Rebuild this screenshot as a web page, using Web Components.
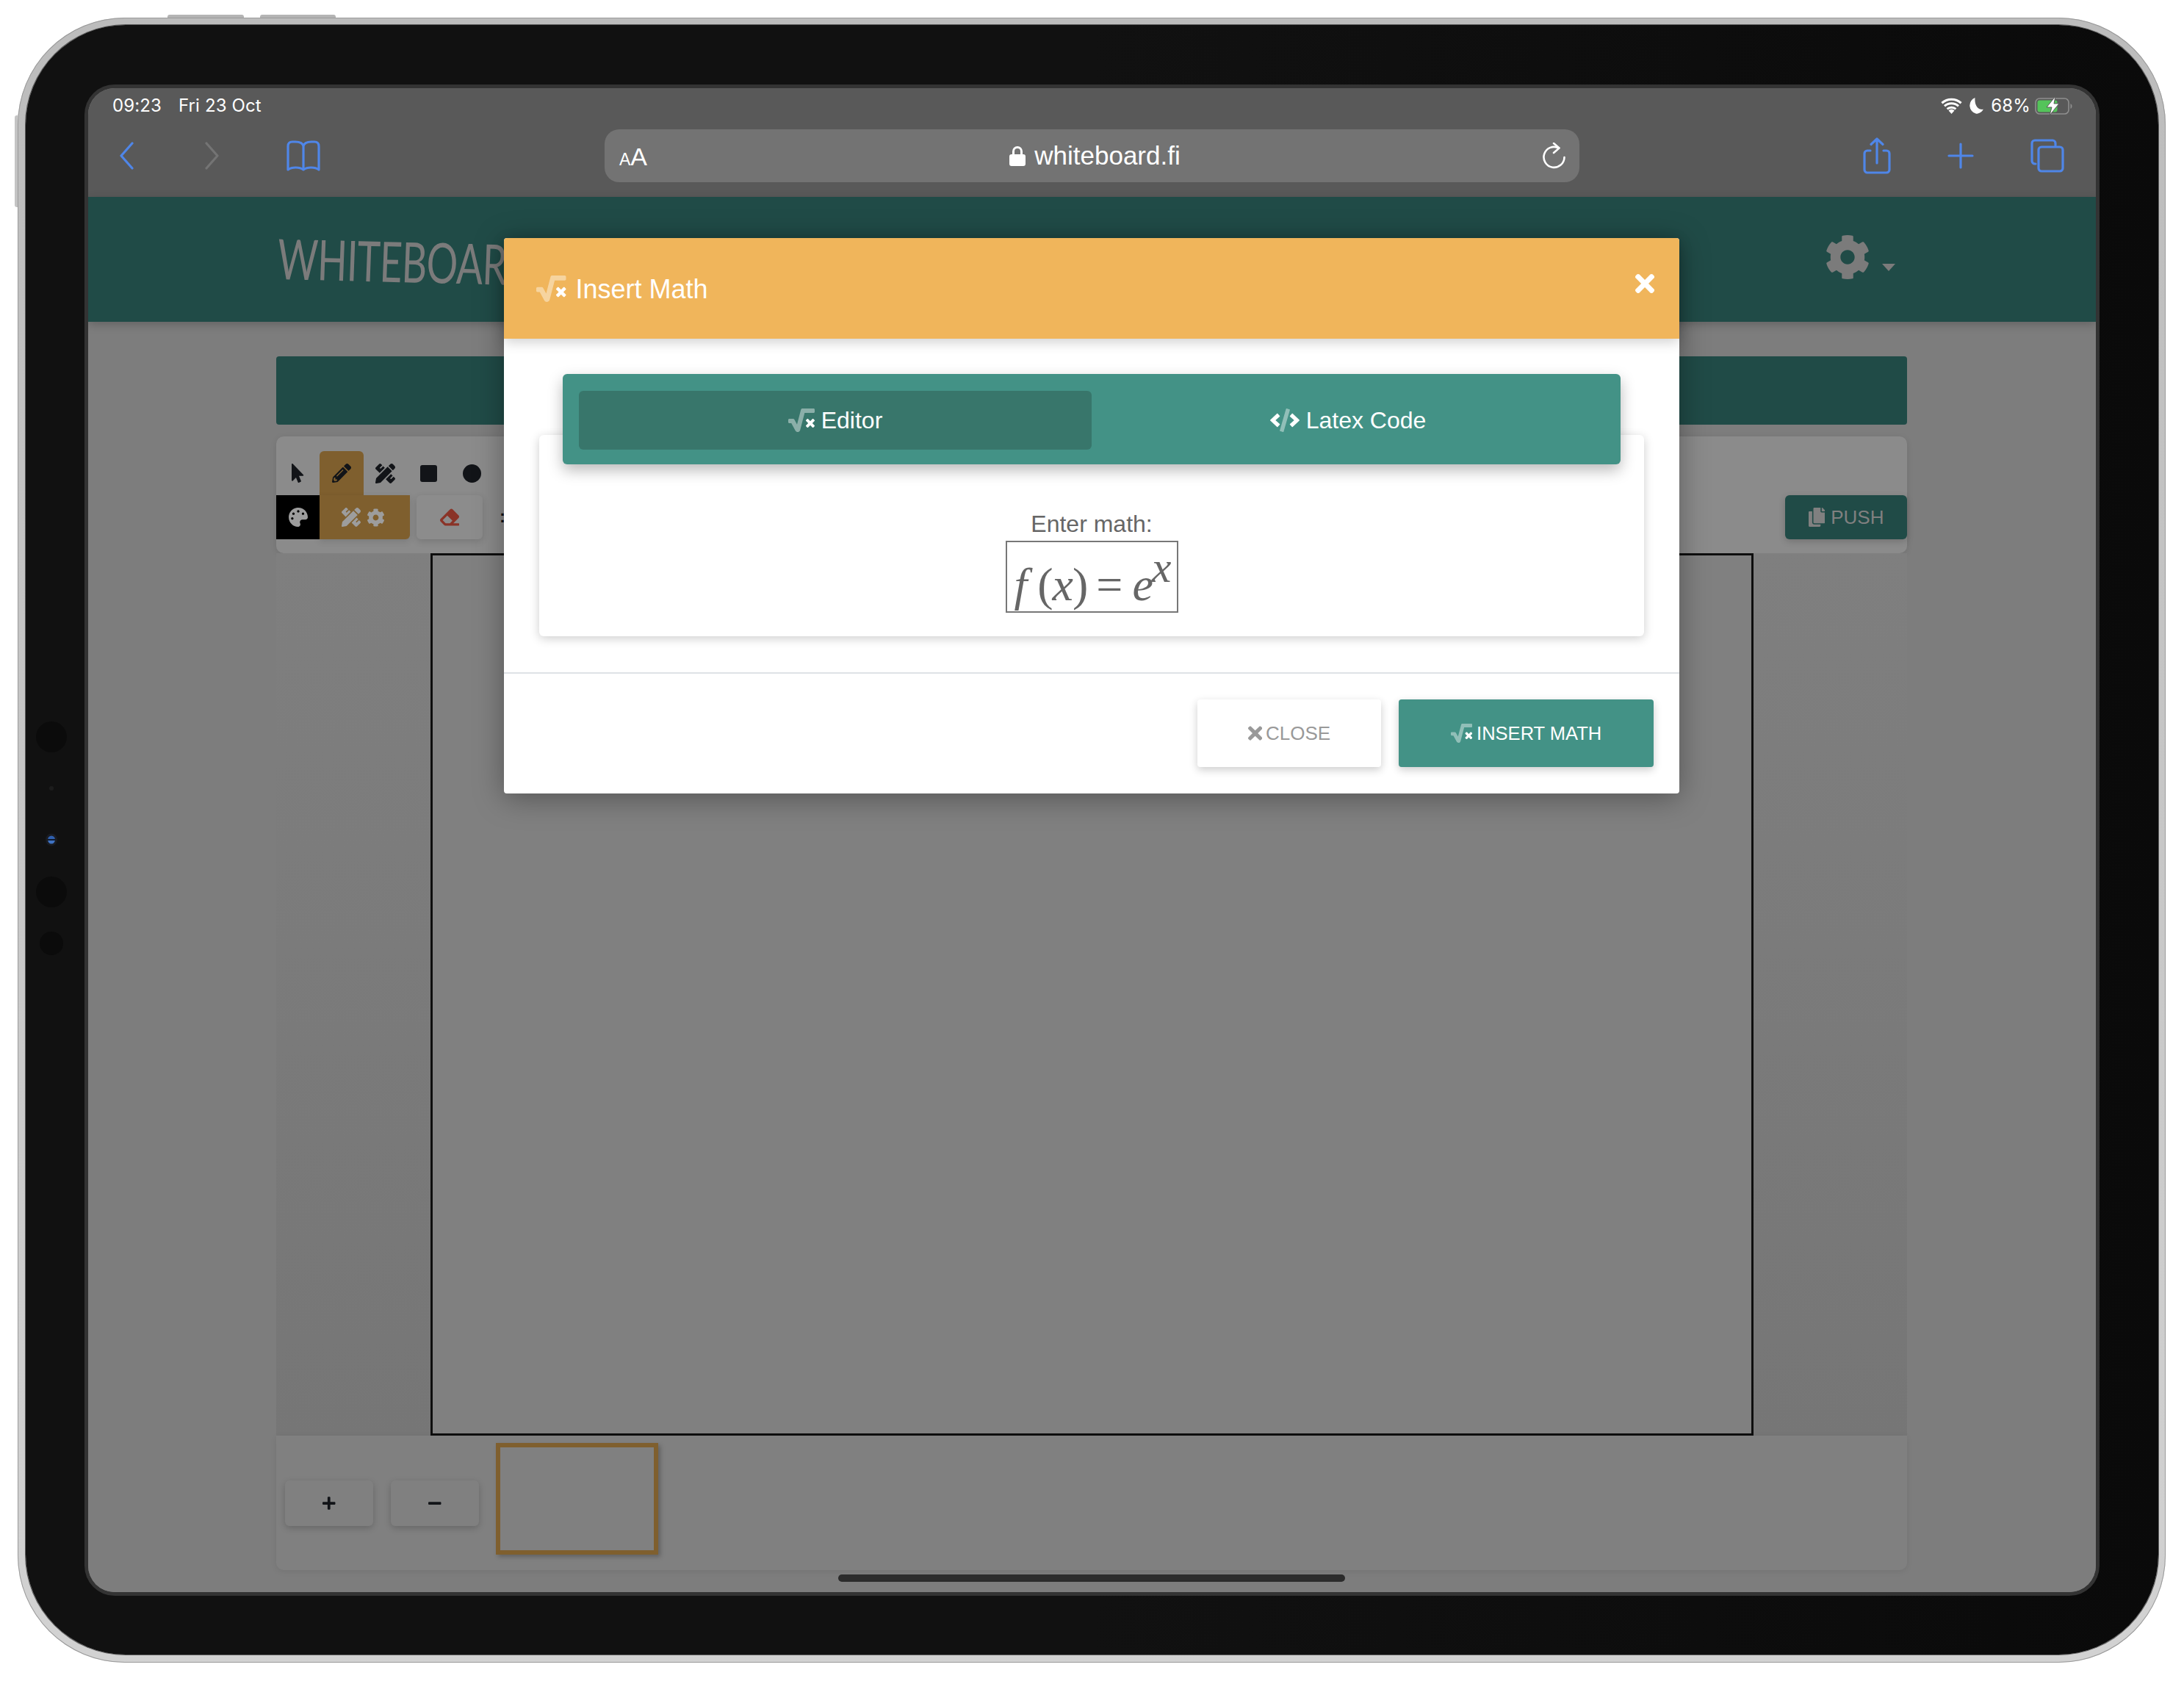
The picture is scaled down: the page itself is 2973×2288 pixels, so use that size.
<!DOCTYPE html>
<html lang="en">
<head>
<meta charset="utf-8">
<title>Whiteboard.fi on iPad</title>
<style>
html,body{margin:0;padding:0;background:#fff;}
body{width:2973px;height:2288px;overflow:hidden;font-family:"Liberation Sans",Arial,sans-serif;}
</style>
</head>
<body>
<ipad-frame>
  <safari-chrome></safari-chrome>
  <app-header></app-header>
  <board-page></board-page>
  <math-modal></math-modal>
</ipad-frame>
<script>
const ICONS={
cog:[512,"M487.4 315.7l-42.6-24.6c4.3-23.2 4.3-47 0-70.2l42.6-24.6c4.9-2.8 7.1-8.6 5.5-14-11.1-35.6-30-67.8-54.7-94.6-3.8-4.1-10-5.1-14.8-2.3L380.8 110c-17.9-15.4-38.5-27.3-60.8-35.1V25.8c0-5.6-3.9-10.5-9.4-11.7-36.7-8.2-74.3-7.8-109.2 0-5.5 1.2-9.4 6.1-9.4 11.7V75c-22.2 7.9-42.8 19.8-60.8 35.1L88.7 85.5c-4.9-2.8-11-1.9-14.8 2.3-24.7 26.7-43.6 58.9-54.7 94.6-1.7 5.4.6 11.2 5.5 14L67.3 221c-4.3 23.2-4.3 47 0 70.2l-42.6 24.6c-4.9 2.8-7.1 8.6-5.5 14 11.1 35.6 30 67.8 54.7 94.6 3.8 4.1 10 5.1 14.8 2.3l42.6-24.6c17.9 15.4 38.5 27.3 60.8 35.1v49.2c0 5.6 3.9 10.5 9.4 11.7 36.7 8.2 74.3 7.8 109.2 0 5.5-1.2 9.4-6.1 9.4-11.7v-49.2c22.2-7.9 42.8-19.8 60.8-35.1l42.6 24.6c4.9 2.8 11 1.9 14.8-2.3 24.7-26.7 43.6-58.9 54.7-94.6 1.5-5.5-.7-11.3-5.6-14.1zM256 336c-44.1 0-80-35.9-80-80s35.9-80 80-80 80 35.9 80 80-35.9 80-80 80z"],
pencil:[512,"M497.9 142.1l-46.1 46.1c-4.7 4.7-12.3 4.7-17 0l-111-111c-4.7-4.7-4.7-12.3 0-17l46.1-46.1c18.7-18.7 49.1-18.7 67.9 0l60.1 60.1c18.8 18.7 18.8 49.1 0 67.9zM284.2 99.8L21.6 362.4.4 483.9c-2.9 16.4 11.4 30.6 27.8 27.8l121.5-21.3 262.6-262.6c4.7-4.7 4.7-12.3 0-17l-111-111c-4.8-4.7-12.4-4.7-17.1 0zM124.1 339.9c-5.5-5.5-5.5-14.3 0-19.8l154-154c5.5-5.5 14.3-5.5 19.8 0s5.5 14.3 0 19.8l-154 154c-5.5 5.5-14.3 5.5-19.8 0zM88 424h48v36.3l-64.5 11.3-31.1-31.1L51.7 376H88v48z"],
pointer:[320,"M302.189 329.126H196.105l55.831 135.993c3.889 9.428-.555 19.999-9.444 23.999l-49.165 21.427c-9.165 4-19.443-.571-23.332-9.714l-53.053-129.136-86.664 89.138C18.729 472.71 0 463.554 0 447.977V18.299C0 1.899 19.921-6.096 30.277 5.443l284.412 292.542c11.472 11.179 3.007 31.141-12.5 31.141z"],
ruler:[512,"M109.46 244.04l134.58-134.56-44.12-44.12-61.68 61.68a7.919 7.919 0 0 1-11.21 0l-11.21-11.21c-3.1-3.1-3.1-8.12 0-11.21l61.68-61.68-33.64-33.65C131.47-3.1 111.39-3.1 99 9.29L9.29 99c-12.38 12.39-12.39 32.47 0 44.86l100.17 100.18zm388.47-116.8c18.76-18.76 18.75-49.17 0-67.93l-45.25-45.25c-18.76-18.76-49.18-18.76-67.95 0l-46.02 46.01 113.2 113.2 46.02-46.03zM316.08 82.71l-297 296.96L.32 487.11c-2.53 14.49 10.09 27.11 24.59 24.56l107.45-18.84L429.28 195.9 316.08 82.71zm186.63 285.43l-33.64-33.64-61.68 61.68c-3.1 3.1-8.12 3.1-11.21 0l-11.21-11.21c-3.09-3.1-3.09-8.12 0-11.21l61.68-61.68-44.14-44.14L267.93 402.5l100.21 100.2c12.39 12.39 32.47 12.39 44.86 0l89.71-89.7c12.39-12.39 12.39-32.47 0-44.86z"],
palette:[512,"M204.3 5C104.9 24.4 24.8 104.3 5.2 203.4c-37 187 131.7 326.4 258.8 306.7 41.2-6.4 61.4-54.6 42.5-91.7-23.1-45.4 9.9-98.4 60.9-98.4h79.7c35.8 0 64.8-29.6 64.9-65.3C511.5 97.1 368.1-26.9 204.3 5zM96 320c-17.7 0-32-14.3-32-32s14.3-32 32-32 32 14.3 32 32-14.3 32-32 32zm32-128c-17.7 0-32-14.3-32-32s14.3-32 32-32 32 14.3 32 32-14.3 32-32 32zm128-64c-17.7 0-32-14.3-32-32s14.3-32 32-32 32 14.3 32 32-14.3 32-32 32zm128 64c-17.7 0-32-14.3-32-32s14.3-32 32-32 32 14.3 32 32-14.3 32-32 32z"],
eraser:[512,"M497.941 273.941c18.745-18.745 18.745-49.137 0-67.882l-160-160c-18.745-18.745-49.136-18.746-67.883 0l-256 256c-18.745 18.745-18.745 49.137 0 67.882l96 96A48.004 48.004 0 0 0 144 480h356c6.627 0 12-5.373 12-12v-40c0-6.627-5.373-12-12-12H355.883l142.058-142.059zm-302.627-62.627l137.373 137.373L265.373 416H150.628l-80-80 124.686-124.686z"],
times:[352,"M242.72 256l100.07-100.07c12.28-12.28 12.28-32.19 0-44.48l-22.24-22.24c-12.28-12.28-32.19-12.28-44.48 0L176 189.28 75.93 89.21c-12.28-12.28-32.19-12.28-44.48 0L9.21 111.45c-12.28 12.28-12.28 32.19 0 44.48L109.28 256 9.21 356.07c-12.28 12.28-12.28 32.19 0 44.48l22.24 22.24c12.28 12.28 32.2 12.28 44.48 0L176 322.72l100.07 100.07c12.28 12.28 32.2 12.28 44.48 0l22.24-22.24c12.28-12.28 12.28-32.19 0-44.48L242.72 256z"],
copy:[448,"M320 448v40c0 13.255-10.745 24-24 24H24c-13.255 0-24-10.745-24-24V120c0-13.255 10.745-24 24-24h72v296c0 30.879 25.121 56 56 56h168zm0-344V0H152c-13.255 0-24 10.745-24 24v368c0 13.255 10.745 24 24 24h272c13.255 0 24-10.745 24-24V128H344c-13.2 0-24-10.8-24-24zm120.971-31.029L375.029 7.029A24 24 0 0 0 358.059 0H352v96h96v-6.059a24 24 0 0 0-7.029-16.97z"],
plus:[448,"M416 208H272V64c0-17.67-14.33-32-32-32h-32c-17.67 0-32 14.33-32 32v144H32c-17.67 0-32 14.33-32 32v32c0 17.67 14.33 32 32 32h144v144c0 17.67 14.33 32 32 32h32c17.67 0 32-14.33 32-32V304h144c17.67 0 32-14.33 32-32v-32c0-17.67-14.33-32-32-32z"],
minus:[448,"M416 208H32c-17.67 0-32 14.33-32 32v32c0 17.67 14.33 32 32 32h384c17.67 0 32-14.33 32-32v-32c0-17.67-14.33-32-32-32z"],
sqrt:[576,"M552 0H307.65c-14.54 0-27.26 9.8-30.95 23.87l-84.79 322.8-58.41-106.1A32.008 32.008 0 0 0 105.47 224H24c-13.25 0-24 10.74-24 24v48c0 13.25 10.75 24 24 24h43.62l88.88 163.73C168.99 503.5 186.3 512 204.94 512c17.27 0 44.44-9 54.28-41.48L357.03 96H552c13.25 0 24-10.75 24-24V24c0-13.26-10.75-24-24-24z","M571.31 251.31l-22.62-22.62c-6.25-6.25-16.38-6.25-22.63 0L480 274.75l-46.06-46.06c-6.25-6.25-16.38-6.25-22.63 0l-22.62 22.62c-6.25 6.25-6.25 16.38 0 22.63L434.75 320l-46.06 46.06c-6.25 6.25-6.25 16.38 0 22.63l22.62 22.62c6.25 6.25 16.38 6.25 22.63 0L480 365.25l46.06 46.06c6.25 6.25 16.38 6.25 22.63 0l22.62-22.62c6.25-6.25 6.25-16.38 0-22.63L525.25 320l46.06-46.06c6.25-6.25 6.25-16.38 0-22.63z"],
code:[640,"M278.9 511.5l-61-17.7c-6.4-1.8-10-8.5-8.2-14.9L346.2 8.7c1.8-6.4 8.5-10 14.9-8.2l61 17.7c6.4 1.8 10 8.5 8.2 14.9L293.8 503.3c-1.9 6.4-8.5 10.1-14.9 8.2z","M164.9 399.3l43.5-46.4c4.6-4.9 4.3-12.7-.8-17.2L117 256l90.6-79.7c5.1-4.5 5.5-12.3.8-17.2l-43.5-46.4c-4.5-4.8-12.1-5.1-17-.5L3.8 247.2c-5.1 4.7-5.1 12.8 0 17.5l144.1 135.1c4.9 4.6 12.5 4.4 17-.5zm327.2.6l144.1-135.1c5.1-4.7 5.1-12.8 0-17.5L492.1 112.1c-4.8-4.5-12.4-4.3-17 .5L431.6 159c-4.6 4.9-4.3 12.7.8 17.2L523 256l-90.6 79.7c-5.1 4.5-5.5 12.3-.8 17.2l43.5 46.4c4.5 4.9 12.1 5.1 17 .6z"]
};
class FaIcon extends HTMLElement{
  connectedCallback(){
    const d=ICONS[this.getAttribute('name')],h=+this.getAttribute('size')||26,w=h*d[0]/512;
    const root=this.attachShadow({mode:'open'});
    const paths=d.length>2?`<path d="${d[1]}" opacity=".42"/><path d="${d[2]}"/>`:`<path d="${d[1]}"/>`;
    root.innerHTML=`<style>:host{display:inline-flex;flex:none;line-height:0}svg{display:block;fill:currentColor}</style><svg width="${w}" height="${h}" viewBox="0 0 ${d[0]} 512">${paths}</svg>`;
  }
}
customElements.define('fa-i',FaIcon);

function shadow(el,html){el.attachShadow({mode:'open'}).innerHTML=html;}

class IpadFrame extends HTMLElement{
  constructor(){super();shadow(this,`<style>
  :host{display:block;position:relative;width:2924px;height:2239px;margin:24px 0 0 24px;}
  .silver{box-sizing:border-box;width:100%;height:100%;padding:10px 10px 11px 11px;border-radius:146px;
    background:linear-gradient(#bcbcbc,#d2d2d2);box-shadow:inset 0 0 0 1px #9a9a9a;}
  .black{box-sizing:border-box;width:100%;height:100%;padding:81px 80px 80px 80px;border-radius:136px;
    background:linear-gradient(90deg,#111 0%,#111 50%,#0a0a0a 100%);box-shadow:0 0 0 1px #5c5c5c;}
  .bezel{box-sizing:border-box;width:100%;height:100%;padding:5px;border-radius:41px;background:#333;}
  .screen{position:relative;display:flex;flex-direction:column;width:100%;height:100%;border-radius:36px;overflow:hidden;background:#808080;}
  .home{position:absolute;left:1021px;bottom:14px;width:690px;height:10px;border-radius:5px;background:#2b2b2b;z-index:5}
  .btn{position:absolute;background:#b4b4b4;}
  .t1{left:204px;top:-4px;width:104px;height:4px;border-radius:3px 3px 0 0}
  .t2{left:330px;top:-4px;width:103px;height:4px;border-radius:3px 3px 0 0}
  .l1{left:-4px;top:133px;width:4px;height:125px;border-radius:3px 0 0 3px;background:#c4c4c4}
  .dot{position:absolute;border-radius:50%;background:#0b0b0b;transform:translate(-50%,-50%);left:46px}
  .cam{background:linear-gradient(#2f5fae 0 40%,#0d1a30 40% 55%,#3f72c2 55%);box-shadow:0 0 0 3px #1a1c21}
  </style>
  <div class="btn t1"></div><div class="btn t2"></div><div class="btn l1"></div>
  <div class="silver"><div class="black"><div class="bezel"><div class="screen"><slot></slot><div class="home"></div></div></div></div></div>
  <div class="dot" style="top:979px;width:42px;height:42px"></div>
  <div class="dot" style="top:1049px;width:6px;height:6px;background:#1d1d1d"></div>
  <div class="dot cam" style="top:1119px;width:10px;height:11px"></div>
  <div class="dot" style="top:1190px;width:42px;height:42px"></div>
  <div class="dot" style="top:1260px;width:32px;height:32px"></div>`);}
}
customElements.define('ipad-frame',IpadFrame);

class SafariChrome extends HTMLElement{
  constructor(){super();shadow(this,`<style>
  :host{display:block;flex:none;height:148px;background:#595959;color:#fff;font-family:Inter,"Liberation Sans",sans-serif;}
  .status{height:48px;display:flex;align-items:center;padding:0 31px 0 33px;font-size:24px;line-height:48px;letter-spacing:.12px}
  .status .date{margin-left:23px}
  .sp{flex:1}
  .status svg{display:block}
  .pct{margin:0 6px 0 10px}
  .tool{height:72px;margin-top:8px;display:flex;align-items:center;padding-left:42px}
  .tool svg{display:block;flex:none;fill:none;stroke:#4f86e8;stroke-width:3.2;stroke-linecap:round;stroke-linejoin:round}
  .url{flex:none;box-sizing:border-box;width:1327px;height:72px;margin:0 386px 0 387px;padding-left:8px;border-radius:20px;background:#737373;position:relative;display:flex;align-items:center;justify-content:center;font-family:"Liberation Sans",Arial,sans-serif;font-size:35px}
  .aa{position:absolute;left:20px;top:17px;line-height:40px;font-size:34px}
  .aa small{font-size:23px}
  .host{display:flex;align-items:center;gap:12px}
  .url svg.lock{fill:#fff;stroke:none}
  .url svg.reload{position:absolute;right:18px;top:18px;stroke:#fff;stroke-width:2.6}
  </style>
  <div class="status"><span>09:23</span><span class="date">Fri 23 Oct</span><span class="sp"></span>
    <svg width="29" height="22" viewBox="0 0 29 22" fill="#fff"><path d="M14.5 22l-4-4.6a6 6 0 0 1 8 0z"/><path d="M7.6 14.3a10.4 10.4 0 0 1 13.8 0l-2 2.3a7.4 7.4 0 0 0-9.8 0z"/><path d="M4 10.2a15.8 15.8 0 0 1 21 0l-2 2.3a12.8 12.8 0 0 0-17 0z"/><path d="M.4 6.1a21 21 0 0 1 28.2 0l-2 2.3a18 18 0 0 0-24.2 0z"/></svg>
    <svg style="margin-left:10px" width="19" height="22" viewBox="0 0 19 22" fill="#fff"><path d="M7.5 0A11.5 11.5 0 0 0 9 21.8c4.4 0 8-2.4 9.8-6-6 1-12.3-3.8-11.3-15.8z"/></svg>
    <span class="pct">68%</span>
    <svg width="52" height="26" viewBox="0 0 52 26"><rect x="1" y="3" width="45" height="21" rx="5.500" fill="none" stroke="#8e8e8e" stroke-width="1.600"/><rect x="3.500" y="5.500" width="27" height="16" rx="3" fill="#54c45a"/><path d="M48.500 10a4 4 0 0 1 0 7z" fill="#8e8e8e"/><path d="M28 0L16 15h7l-3 11 13-16h-7z" fill="#fff" stroke="#595959" stroke-width="1"/></svg>
  </div>
  <div class="tool">
    <svg width="20" height="38" viewBox="0 0 20 38"><path d="M18 2L3 19l15 17"/></svg>
    <svg style="margin-left:97px;stroke:#747474" width="20" height="38" viewBox="0 0 20 38"><path d="M2 2l15 17L2 36"/></svg>
    <svg style="margin-left:91px" width="46" height="42" viewBox="0 0 46 42"><path d="M23 8C22 3 18 2 12 2H8C4 2 2 4 2 8v32c5-4 16-4 21 0 5-4 16-4 21 0V8c0-4-2-6-6-6h-4c-6 0-10 1-11 6v32"/></svg>
    <div class="url">
      <span class="aa"><small>A</small>A</span>
      <span class="host"><svg class="lock" width="22" height="28" viewBox="0 0 22 28"><path d="M4 12V8a7 7 0 0 1 14 0v4h1a3 3 0 0 1 3 3v10a3 3 0 0 1-3 3H3a3 3 0 0 1-3-3V15a3 3 0 0 1 3-3zm3 0h8V8a4 4 0 0 0-8 0z"/></svg>whiteboard.fi</span>
      <svg class="reload" width="32" height="38" viewBox="0 0 32 38"><path d="M22 7.500A14 14 0 1 0 29.500 20"/><path d="M15 1l7.500 6.500L15 14"/></svg>
    </div>
    <svg width="38" height="50" viewBox="0 0 38 50"><path d="M10 18H6a4 4 0 0 0-4 4v22a4 4 0 0 0 4 4h26a4 4 0 0 0 4-4V22a4 4 0 0 0-4-4h-4M19 35V2M11 9.500L19 2l8 7.500"/></svg>
    <svg style="margin-left:77px" width="36" height="36" viewBox="0 0 36 36"><path d="M18 2v32M2 18h32"/></svg>
    <svg style="margin-left:77px" width="46" height="46" viewBox="0 0 46 46"><path d="M7 34h-1a4 4 0 0 1-4-4V6a4 4 0 0 1 4-4h24a4 4 0 0 1 4 4v3"/><rect x="11" y="11" width="33" height="33" rx="4"/></svg>
  </div>`);}
}
customElements.define('safari-chrome',SafariChrome);

class AppHeader extends HTMLElement{
  constructor(){super();shadow(this,`<style>
  :host{display:flex;align-items:center;flex:none;height:170px;box-sizing:border-box;padding:0 273px 0 258px;background:#204b47;position:relative;z-index:2;box-shadow:0 4px 12px rgba(0,0,0,.2);color:#7b7b7b}
  .logo{font:400 76px/1 Lato,"Liberation Sans",sans-serif;white-space:nowrap;transform-origin:0 50%;transform:scaleX(.7) skewX(-3deg) skewY(1deg);margin-top:-4px;letter-spacing:-1px}
  .sp{flex:1}
  .caret{width:0;height:0;border:9px solid transparent;border-top:10px solid #7b7b7b;border-bottom:0;margin:22px 0 0 16px}
  fa-i{margin-top:-6px}
  </style><span class="logo">WHITEBOARD.fi</span><span class="sp"></span><fa-i name="cog" size="62"></fa-i><span class="caret"></span>`);}
}
customElements.define('app-header',AppHeader);

class ToolBar extends HTMLElement{
  constructor(){super();shadow(this,`<style>
  :host{display:block;box-sizing:border-box;height:159px;padding:20px 0 19px;background:#8b8b8b;border-radius:10px;box-shadow:0 2px 8px rgba(0,0,0,.1);color:#121418}
  .row{display:flex;height:60px}
  .cell{flex:none;box-sizing:border-box;width:59px;height:60px;display:flex;align-items:center;justify-content:center}
  .on{background:#7f5f2e;border-radius:6px 6px 0 0;width:60px}
  .pal{background:#000;color:#9d9d9d}
  .grp{width:123px;background:#7f5f2e;color:#9d9d9d;gap:8px;border-radius:0 0 6px 0;box-shadow:0 3px 10px rgba(0,0,0,.12)}
  .era{width:90px;margin-left:9px;background:#8c8c8c;border-radius:6px;color:#8a3327;box-shadow:0 3px 10px rgba(0,0,0,.15)}
  .sq{width:23px;height:23px;background:#121418;border-radius:3px}
  .ci{width:25px;height:25px;background:#121418;border-radius:50%}
  .dots{margin-left:23px;font:bold 24px/58px "Liberation Sans",sans-serif;color:#121418}
  .push{margin-left:auto;display:flex;align-items:center;justify-content:center;gap:8px;box-sizing:border-box;width:166px;height:60px;background:#204b47;border-radius:6px;color:#808080;font-size:26px;box-shadow:0 3px 10px rgba(0,0,0,.18)}
  </style>
  <div class="row"><div class="cell"><fa-i name="pointer" size="26"></fa-i></div><div class="cell on"><fa-i name="pencil" size="26"></fa-i></div><div class="cell"><fa-i name="ruler" size="27"></fa-i></div><div class="cell"><span class="sq"></span></div><div class="cell"><span class="ci"></span></div></div>
  <div class="row"><div class="cell pal"><fa-i name="palette" size="26"></fa-i></div><div class="cell grp" style="padding-right:4px"><fa-i name="ruler" size="26"></fa-i><fa-i name="cog" size="25"></fa-i></div><div class="cell era"><fa-i name="eraser" size="26"></fa-i></div><span class="dots">:</span><div class="push"><fa-i name="copy" size="26"></fa-i><span>PUSH</span></div></div>`);}
}
customElements.define('tool-bar',ToolBar);

class BoardPage extends HTMLElement{
  constructor(){super();shadow(this,`<style>
  :host{display:block;flex:1;box-sizing:border-box;padding:47px 257px 0 256px;background:#7d7d7d;}
  .band{height:93px;background:#204b47;border-radius:4px;margin-bottom:16px}
  .wrap{height:1202px;display:flex;justify-content:center;background:linear-gradient(#7f7f7f,#767676)}
  .canvas{box-sizing:border-box;width:1801px;height:1201px;background:#808080;border:3px solid #0e0e0e;}
  .foot{display:flex;align-items:center;box-sizing:border-box;height:183px;padding-left:12px;background:#808080;border-radius:0 0 10px 10px;box-shadow:0 2px 8px rgba(0,0,0,.08);margin-top:-1px;position:relative}
  .b{display:flex;align-items:center;justify-content:center;width:120px;height:62px;margin-right:24px;border-radius:6px;background:#808080;color:#121418;box-shadow:0 3px 10px rgba(0,0,0,.2)}
  .thumb{box-sizing:border-box;width:221px;height:152px;border:6px solid #7f5f2e;margin:-11px 0 0 -1px;background:#808080;box-shadow:3px 3px 6px rgba(0,0,0,.25)}
  </style>
  <div class="band"></div>
  <tool-bar></tool-bar>
  <div class="wrap"><div class="canvas"></div></div>
  <div class="foot"><div class="b"><fa-i name="plus" size="20"></fa-i></div><div class="b"><fa-i name="minus" size="20"></fa-i></div><div class="thumb"></div></div>`);}
}
customElements.define('board-page',BoardPage);

class AppBtn extends HTMLElement{
  constructor(){super();shadow(this,`<style>
  :host{display:flex;align-items:center;justify-content:center;gap:6px;height:92px;box-sizing:border-box;border-radius:4px;font-size:26px;box-shadow:0 4px 12px rgba(0,0,0,.2)}
  </style><slot></slot>`);}
}
customElements.define('app-btn',AppBtn);

class MathModal extends HTMLElement{
  constructor(){super();shadow(this,`<style>
  :host{position:absolute;left:566px;top:204px;width:1600px;z-index:4;display:block;background:#fff;color:#666;border-radius:4px;box-shadow:0 6px 40px rgba(0,0,0,.35);font-family:"Liberation Sans",Arial,sans-serif}
  .head{height:137px;box-sizing:border-box;padding:0 34px 0 44px;display:flex;align-items:center;background:#f0b55b;color:#fff;font-size:36px;border-radius:4px 4px 0 0;box-shadow:0 4px 18px rgba(0,0,0,.2);position:relative;z-index:1}
  .head span{margin:2px 0 0 13px;flex:1}
  .head .x{margin:-14px 0 0}
  .body{padding:48px 48px 49px}
  .tabs{position:relative;z-index:1;display:flex;margin:0 32px;padding:23px 22px 20px;background:#439286;border-radius:6px;color:#fff;font-size:32px;box-shadow:0 8px 20px rgba(0,0,0,.28)}
  .tab{flex:1;height:80px;display:flex;align-items:center;justify-content:center;gap:9px;border-radius:6px}
  .tab.on{background:#38766b}
  .card{margin-top:-40px;height:274px;box-sizing:border-box;padding-top:102px;background:#fff;border-radius:6px;box-shadow:0 3px 14px rgba(0,0,0,.2);text-align:center;font-size:32px;line-height:38px}
  .box{box-sizing:border-box;width:235px;height:98px;margin:4px auto 0;border:2px solid #777;overflow:hidden;text-align:left;white-space:nowrap;font:64px/1 "Liberation Serif","Times New Roman",serif;padding:26px 0 0 10px}
  i{font-style:italic}
  .f{margin-right:14px}
  .par{letter-spacing:-1px}
  .eq{margin:0 13px 0 12px}
  sup{font-size:60px;line-height:0;vertical-align:25px;font-style:italic;margin-left:-2px}
  .foot{border-top:2px solid #dee2e6;padding:35px 35px 36px;display:flex;justify-content:flex-end;gap:24px}
  .close{width:250px;background:#fff;color:#999}
  .ins{width:347px;background:#439286;color:#fff;font-size:25.500px}
  .close fa-i{margin-right:-1px}
  </style>
  <div class="head"><fa-i name="sqrt" size="36"></fa-i><span>Insert Math</span><fa-i class="x" name="times" size="38"></fa-i></div>
  <div class="body">
    <div class="tabs"><div class="tab on"><fa-i name="sqrt" size="32"></fa-i>Editor</div><div class="tab"><fa-i name="code" size="32"></fa-i>Latex Code</div></div>
    <div class="card">Enter math:<div class="box"><i class="f">f</i><span class="par">(<i>x</i>)</span><span class="eq">=</span><i>e</i><sup>x</sup></div></div>
  </div>
  <div class="foot"><app-btn class="close"><fa-i name="times" size="28"></fa-i>CLOSE</app-btn><app-btn class="ins"><fa-i name="sqrt" size="26"></fa-i>INSERT MATH</app-btn></div>`);}
}
customElements.define('math-modal',MathModal);
</script>
</body>
</html>
